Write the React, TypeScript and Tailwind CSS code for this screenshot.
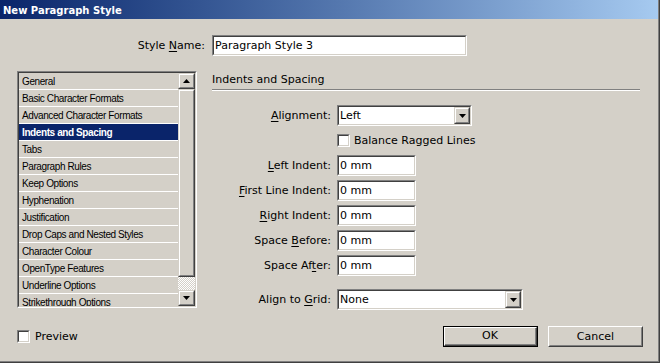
import React from "react";

const items = [
  "General",
  "Basic Character Formats",
  "Advanced Character Formats",
  "Indents and Spacing",
  "Tabs",
  "Paragraph Rules",
  "Keep Options",
  "Hyphenation",
  "Justification",
  "Drop Caps and Nested Styles",
  "Character Colour",
  "OpenType Features",
  "Underline Options",
  "Strikethrough Options",
];

const Arrow = ({ up }: { up?: boolean }) => (
  <svg width="7" height="4" viewBox="0 0 7 4">
    {up ? <polygon points="3.5,0 7,4 0,4" fill="#000" /> : <polygon points="0,0 7,0 3.5,4" fill="#000" />}
  </svg>
);

const Raised = ({ className = "", children }: { className?: string; children?: React.ReactNode }) => (
  <div className={`border border-t-[#d4d0c8] border-l-[#d4d0c8] border-r-[#404040] border-b-[#404040] ${className}`}>
    <div className="w-full h-full border border-t-white border-l-white border-r-[#808080] border-b-[#808080] bg-[#d4d0c8] flex items-center justify-center">
      {children}
    </div>
  </div>
);

const Sunken = ({ className = "", children }: { className?: string; children?: React.ReactNode }) => (
  <div className={`border border-t-[#808080] border-l-[#808080] border-r-white border-b-white ${className}`}>
    <div className="w-full h-full border border-t-[#404040] border-l-[#404040] border-r-[#d4d0c8] border-b-[#d4d0c8] bg-white flex items-center">
      {children}
    </div>
  </div>
);

const Check = () => (
  <div className="w-[13px] h-[13px] border border-t-[#808080] border-l-[#808080] border-r-white border-b-white">
    <div className="w-full h-full border border-t-[#404040] border-l-[#404040] border-r-[#d4d0c8] border-b-[#d4d0c8] bg-white" />
  </div>
);

const Field = ({ value }: { value: string }) => (
  <Sunken className="w-[79px] h-[21px]">
    <span className="pl-[1px] pt-[1px]">{value}</span>
  </Sunken>
);

const Select = ({ value, width }: { value: string; width: string }) => (
  <Sunken className={`${width} h-[21px]`}>
    <span className="pl-[1px] pt-[1px] flex-1">{value}</span>
    <Raised className="w-[16px] h-[17px]">
      <Arrow />
    </Raised>
  </Sunken>
);

const Row = ({ label, children, className = "" }: { label: React.ReactNode; children: React.ReactNode; className?: string }) => (
  <div className={`flex items-center ${className}`}>
    <div className="w-[119px] text-right mr-[6px] pt-[1px] whitespace-nowrap">{label}</div>
    {children}
  </div>
);

const U = ({ children }: { children: React.ReactNode }) => <span className="underline underline-offset-[2px]">{children}</span>;

export default function App() {
  return (
    <div className="w-[660px] h-[363px] bg-[#d4d0c8] border-r border-b border-r-[#404040] border-b-[#404040] font-['DejaVu_Sans',sans-serif] text-[11px] text-black">
      <div className="w-full h-full border-r border-b border-r-[#808080] border-b-[#808080] flex flex-col">
        <div className="h-[19px] bg-linear-to-r from-[#0a246a] to-[#a6caf0] flex items-center pl-[3px] pt-[1px] text-white font-bold text-[10px]">
          New Paragraph Style
        </div>

        <div className="flex items-center mt-[16px]">
          <div className="w-[206px] text-right pr-[1px] pt-[1px]">
            Style <U>N</U>ame:
          </div>
          <Sunken className="ml-[6px] w-[255px] h-[21px]">
            <span className="pl-[1px] pt-[1px]">Paragraph Style 3</span>
          </Sunken>
        </div>

        <div className="flex mt-[15px] h-[239px]">
          <div className="ml-[17px] w-[180px] h-[237px] border border-t-[#808080] border-l-[#808080] border-r-white border-b-white">
            <div className="w-full h-full border border-t-[#404040] border-l-[#404040] border-r-[#d4d0c8] border-b-[#d4d0c8] flex">
              <div className="flex-1 overflow-hidden font-['Liberation_Sans',Arial,sans-serif] text-[10px] tracking-[-0.4px]">
                {items.map((item, i) => (
                  <div
                    key={item}
                    className={`h-[17px] leading-[17px] pl-[3px] border-b border-b-white whitespace-nowrap ${
                      i === 3 ? "bg-[#0a246a] text-white font-bold" : "bg-[#d4d0c8]"
                    }`}
                  >
                    {item}
                  </div>
                ))}
              </div>
              <div className="w-[17px] flex flex-col">
                <Raised className="h-[16px]">
                  <Arrow up />
                </Raised>
                <Raised className="flex-1" />
                <div className="h-[13px] bg-[image:repeating-conic-gradient(#ffffff_0_25%,#d4d0c8_0_50%)] bg-[length:2px_2px]" />
                <Raised className="h-[16px]">
                  <Arrow />
                </Raised>
              </div>
            </div>
          </div>

          <div className="ml-[15px] w-[428px] flex flex-col">
            <div className="h-[18px] flex items-center pt-[1px]">Indents and Spacing</div>
            <div className="h-[2px] border-t border-b border-t-[#808080] border-b-white" />

            <Row label={<><U>A</U>lignment:</>} className="mt-[14px]">
              <Select value="Left" width="w-[135px]" />
            </Row>
            <div className="flex items-center mt-[8px] ml-[125px] h-[13px]">
              <Check />
              <span className="ml-[4px] pt-[1px]">Balance Ragged Lines</span>
            </div>
            <Row label={<><U>L</U>eft Indent:</>} className="mt-[8px]">
              <Field value="0 mm" />
            </Row>
            <Row label={<><U>F</U>irst Line Indent:</>} className="mt-[4px]">
              <Field value="0 mm" />
            </Row>
            <Row label={<><U>R</U>ight Indent:</>} className="mt-[4px]">
              <Field value="0 mm" />
            </Row>
            <Row label={<>Space <U>B</U>efore:</>} className="mt-[4px]">
              <Field value="0 mm" />
            </Row>
            <Row label={<>Space Af<U>t</U>er:</>} className="mt-[4px]">
              <Field value="0 mm" />
            </Row>
            <Row label={<>Align to <U>G</U>rid:</>} className="mt-[13px]">
              <Select value="None" width="w-[186px]" />
            </Row>
          </div>
        </div>

        <div className="flex items-center mt-[16px] pl-[17px] pr-[15px] h-[21px]">
          <Check />
          <span className="ml-[5px] pt-[1px]">Preview</span>
          <div className="ml-auto flex gap-[10px]">
            <div className="w-[95px] h-[21px] border border-black">
              <div className="w-full h-full border border-t-white border-l-white border-r-[#404040] border-b-[#404040]">
                <div className="w-full h-full border-r border-b border-r-[#808080] border-b-[#808080] flex items-center justify-center pt-[1px]">
                  OK
                </div>
              </div>
            </div>
            <div className="w-[95px] h-[21px] border border-t-white border-l-white border-r-[#404040] border-b-[#404040]">
              <div className="w-full h-full border border-t-[#d4d0c8] border-l-[#d4d0c8] border-r-[#808080] border-b-[#808080] flex items-center justify-center pt-[1px]">
                Cancel
              </div>
            </div>
          </div>
        </div>
      </div>
    </div>
  );
}
